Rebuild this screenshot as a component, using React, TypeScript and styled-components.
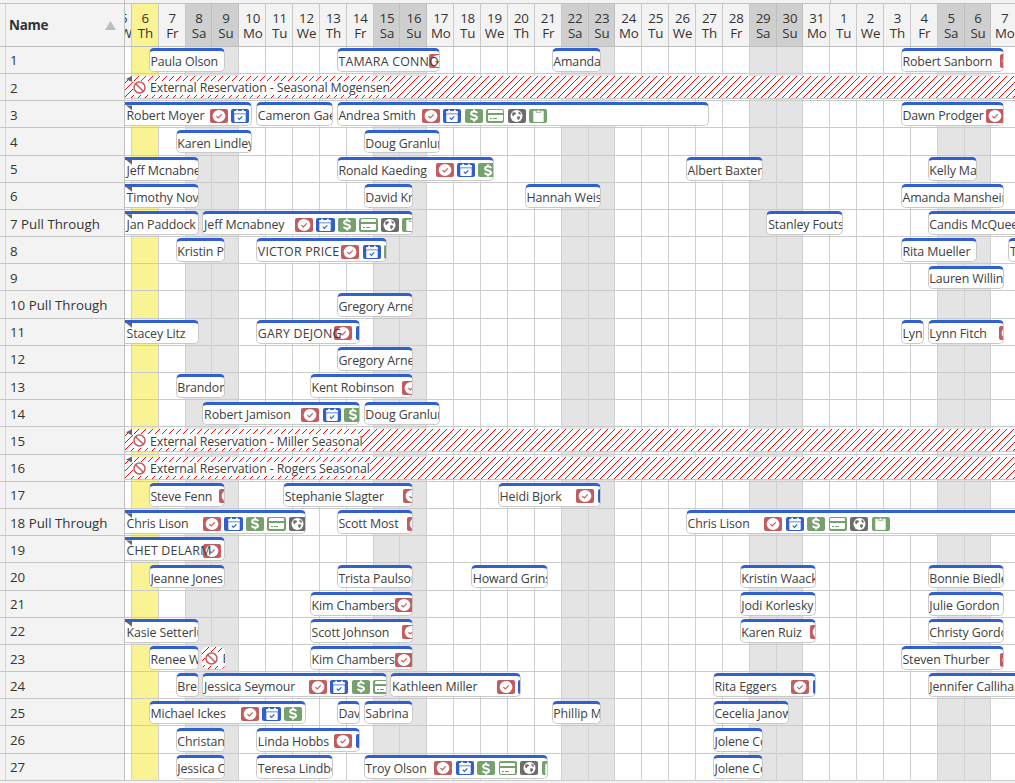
import React from 'react';
import styled, { createGlobalStyle, css } from 'styled-components';

const DAY = 26.87;
const LEAD = 6.9;
const ROW = 27.19;

const Global = createGlobalStyle`
  *, *::before, *::after { box-sizing: border-box; }
  body { margin: 0; background: #f3f3f3; overflow: hidden; }
`;

const Page = styled.div`
  width: 1015px;
  height: 783px;
  overflow: hidden;
  display: flex;
  flex-direction: column;
  background: #f3f3f3;
  color: #333;
  font-family: 'Open Sans', 'Noto Sans', sans-serif;
`;

const MonthStrip = styled.div`
  height: 4px;
  flex: none;
  display: grid;
  grid-template-columns: 125px 706px 1fr;
  background: #f3f3f3;
  border-bottom: 1px solid #c0c0c0;
`;
const MonthCell = styled.div`
  border-right: 1px solid #c0c0c0;
  &:last-child { border-right: 0; }
`;

const columns = css`
  grid-template-columns: 125px 890px;
`;

const Header = styled.div`
  display: grid;
  ${columns}
  height: 42.8px;
  flex: none;
  border-bottom: 1px solid #bdbdbd;
`;
const Gutter = styled.div`
  width: 6px;
  flex: none;
  border-right: 1px solid #d4d4d4;
`;
const NameHead = styled.div`
  display: flex;
  align-items: stretch;
  border-right: 1px solid #c0c0c0;
  font-size: 13.5px;
  font-weight: 700;
`;
const NameTitle = styled.div`
  flex: 1;
  display: flex;
  align-items: center;
  justify-content: space-between;
  padding: 1px 8px 0 3px;
  letter-spacing: -0.3px;
`;
const Days = styled.div`
  display: grid;
  grid-template-columns: ${LEAD}px repeat(35, ${DAY}px);
  overflow: hidden;
`;
const Day = styled.div<{ $tone: string }>`
  display: flex;
  flex-direction: column;
  align-items: ${p => (p.$tone === 'cut' ? 'flex-start' : 'center')};
  overflow: hidden;
  padding-top: 7px;
  padding-left: ${p => (p.$tone === 'cut' ? 0 : 1)}px;
  border-right: 1px solid ${p => (p.$tone === 'weekend' ? '#bfbfbf' : '#cacaca')};
  background: ${p => (p.$tone === 'today' ? '#faf393' : p.$tone === 'weekend' ? '#cfcfcf' : '#f3f3f3')};
  font-size: 13.3px;
  line-height: 15px;
  letter-spacing: -0.15px;
  span {
    flex: none;
    margin-left: ${p => (p.$tone === 'cut' ? -5 : 0)}px;
  }
`;

const Body = styled.div`
  display: grid;
  grid-template-rows: repeat(27, ${ROW}px);
  flex: none;
`;
const Row = styled.div`
  display: grid;
  ${columns}
  min-height: 0;
`;
const NameCell = styled.div`
  display: flex;
  min-height: 0;
  border-right: 1px solid #c0c0c0;
  border-bottom: 1px solid #c6c6c6;
  font-size: 13.3px;
`;
const NameText = styled.div`
  padding: 1px 0 0 4px;
  display: flex;
  align-items: center;
  white-space: nowrap;
`;
const Track = styled.div`
  display: grid;
  grid-template-columns: ${LEAD}px repeat(35, ${DAY}px);
  grid-template-rows: 100%;
  overflow: hidden;
  background: #fff;
  min-height: 0;
`;
const Cell = styled.div<{ $col: number; $tone: string }>`
  grid-row: 1;
  grid-column: ${p => p.$col};
  border-right: 1px solid #d0d0d0;
  border-bottom: 1px solid #cacaca;
  background: ${p => (p.$tone === 'today' ? '#faf393' : p.$tone === 'weekend' ? '#e4e4e4' : '#fff')};
`;
const Bar = styled.div<{ $s: number; $e: number; $blocked?: boolean }>`
  grid-row: 1;
  grid-column: ${p => (p.$s === 0 ? 1 : p.$s - 4)} / ${p => p.$e - 4};
  position: relative;
  z-index: 1;
  min-width: 0;
  height: 23.8px;
  margin: 1.3px -12.9px 0 ${p => (p.$s === 0 ? 0 : 16.8)}px;
  padding-top: 1px;
  padding-left: ${p => (p.$s === 0 ? 1.5 : 0.7)}px;
  display: flex;
  align-items: center;
  overflow: hidden;
  white-space: nowrap;
  background: #fff;
  border: 1px solid #c9c9c9;
  border-left-width: ${p => (p.$s === 0 ? 0 : 1)}px;
  border-top: 3px solid #2f5fd0;
  border-radius: ${p => (p.$s === 0 ? '0 5px 5px 0' : '5px')};
  ${p => p.$blocked && css`
    height: 23px;
    margin-top: 1.9px;
    border-width: 0 0 1px;
    border-color: #ccc;
    padding-left: ${p.$s === 0 ? 8 : 3}px;
    background: linear-gradient(135deg, #f00 0 5%, #fff 5% 45%, #f00 45% 55%, #fff 55% 95%, #f00 95%) 0 0 / 7px 7px;
  `}
`;
const Label = styled.span<{ $w?: number; $caps?: boolean }>`
  flex: none;
  position: relative;
  z-index: 1;
  width: ${p => (p.$w ? `${p.$w}px` : 'auto')};
  padding-top: 1px;
  font-size: 12.4px;
  line-height: 16px;
  letter-spacing: ${p => (p.$caps ? 0.2 : -0.11)}px;
  color: #404040;
`;
const Blocked = styled.span`
  flex: none;
  display: flex;
  align-items: center;
  gap: 4px;
  height: 14px;
  margin-top: 1px;
  background: #fff;
  svg { margin-top: -1px; }
`;
const Notch = styled.i<{ $blocked?: boolean }>`
  position: absolute;
  top: 0;
  left: 1px;
  width: 6px;
  height: 6px;
  background: #666;
  clip-path: ${p => (p.$blocked ? 'polygon(100% 0, 100% 100%, 0 50%)' : 'polygon(0 0, 100% 0, 100% 80%)')};
`;
const Badges = styled.span`
  display: flex;
  flex: none;
  gap: 3.4px;
`;
const Badge = styled.span<{ $c: string }>`
  width: 18.1px;
  height: 14px;
  flex: none;
  display: flex;
  align-items: center;
  justify-content: center;
  border-radius: 2px;
  background: ${p => p.$c};
`;

const red = '#c45c5f';
const blue = '#2f5fd0';
const green = '#76a06c';
const gray = '#6c6c6c';

const BadgeSet = () => (
  <Badges>
    <Badge $c={red}>
      <svg width="14" height="12" viewBox="0 0 14 12">
        <ellipse cx="7" cy="6" rx="6.4" ry="6" fill="#fff" />
        <path d="M4.4 6.1l1.9 1.9 3.5-3.6" fill="none" stroke={red} strokeWidth="1.2" />
      </svg>
    </Badge>
    <Badge $c={blue}>
      <svg width="14" height="14" viewBox="0 0 14 14">
        <path d="M2 2h1.200V.8h1.900V2h3.800V.8h1.900V2H12q1 0 1 1v1.500H1V3q0-1 1-1zM1.300 5.200h11.400V12q0 1-1 1H2.300q-1 0-1-1z" fill="#fff" />
        <path d="M4.800 8.700l1.600 1.600 2.900-3" fill="none" stroke={blue} strokeWidth="1.200" />
      </svg>
    </Badge>
    <Badge $c={green}>
      <svg width="10" height="13" viewBox="0 0 10 13">
        <path d="M8.100 4.100C7.600 2.900 6.400 2.500 5 2.500c-1.700 0-2.900.7-2.900 1.900 0 1.400 1.400 1.700 2.900 2.100 1.600.4 3 .8 3 2.200C8 9.900 6.700 10.500 5 10.500c-1.600 0-2.800-.5-3.200-1.700M5 .6v2M5 10.400v2" fill="none" stroke="#fff" strokeWidth="2" />
      </svg>
    </Badge>
    <Badge $c={green}>
      <svg width="15" height="11" viewBox="0 0 15 11">
        <path d="M1.200 0h12.600Q15 0 15 1.200V3H0V1.200Q0 0 1.200 0zM0 5h15v4.800Q15 11 13.800 11H1.200Q0 11 0 9.800z" fill="#fff" />
        <path d="M2 8.500h2M5 8.500h4" stroke={green} strokeWidth="1.100" />
      </svg>
    </Badge>
    <Badge $c={gray}>
      <svg width="13" height="12" viewBox="0 0 13 12">
        <circle cx="6.500" cy="6" r="6" fill="#fff" />
        <path d="M2.400 2.600l2.800-.4 1 1.600-2 1.200-.4 1.200-1.700-.9zM8.200 1.500l2.300 1.300.5 1.900-2.200-.4zM7.200 6.200l2.600.3.4 1.600-2 2.100-1-1.600z" fill={gray} />
      </svg>
    </Badge>
    <Badge $c={green}>
      <svg width="11" height="13" viewBox="0 0 11 13">
        <path d="M1.300 1.800h8.400q1 0 1 1V12q0 1-1 1H1.300q-1 0-1-1V2.800q0-1 1-1z" fill="#fff" />
        <path d="M3.200 3.400V1.700h1.300Q5.500 0 6.500 1.700h1.300v1.700z" fill="#fff" stroke={green} strokeWidth=".7" />
      </svg>
    </Badge>
  </Badges>
);

const NoEntry = () => (
  <svg width="13" height="13" viewBox="0 0 13 13">
    <circle cx="6.500" cy="6.500" r="5.500" fill="#fff" stroke={red} strokeWidth="1.500" />
    <path d="M2.700 2.700l7.600 7.600" stroke={red} strokeWidth="1.500" />
  </svg>
);

/* Day numbers run on past the 31st; a start of 0 means the stay began before the visible range. */
type Stay = { s: number; e: number; t: string; i?: number; blocked?: boolean };
const r = (s: number, e: number, t: string, i?: number): Stay => ({ s, e, t, i });
const x = (s: number, e: number, t: string): Stay => ({ s, e, t, blocked: true });

const rows: [string, Stay[]][] = [
  ['1', [r(6, 9, 'Paula Olson'), r(13, 17, 'TAMARA CONNO', 429), r(21, 23, 'Amanda'), r(34, 38, 'Robert Sanborn', 1000)]],
  ['2', [x(0, 40, 'External Reservation - Seasonal Mogensen')]],
  ['3', [r(0, 10, 'Robert Moyer', 209.7), r(10, 13, 'Cameron Gaetz'), r(13, 27, 'Andrea Smith', 421.7), r(34, 38, 'Dawn Prodger', 986)]],
  ['4', [r(7, 10, 'Karen Lindley'), r(14, 17, 'Doug Granlund')]],
  ['5', [r(0, 8, 'Jeff Mcnabney'), r(13, 19, 'Ronald Kaeding', 435.3), r(26, 29, 'Albert Baxter'), r(35, 37, 'Kelly Mann')]],
  ['6', [r(0, 8, 'Timothy Novak'), r(14, 16, 'David Kruse'), r(20, 23, 'Hannah Weiss'), r(34, 38, 'Amanda Mansheim')]],
  ['7 Pull Through', [r(0, 8, 'Jan Paddock'), r(8, 16, 'Jeff Mcnabney', 294.7), r(29, 32, 'Stanley Fouts'), r(35, 40, 'Candis McQueen')]],
  ['8', [r(7, 9, 'Kristin Park'), r(10, 15, 'VICTOR PRICE', 341), r(34, 37, 'Rita Mueller'), r(38, 40, 'T')]],
  ['9', [r(35, 38, 'Lauren Willing')]],
  ['10 Pull Through', [r(13, 16, 'Gregory Arnett')]],
  ['11', [r(0, 8, 'Stacey Litz'), r(10, 14, 'GARY DEJONG', 334), r(34, 35, 'Lynn'), r(35, 38, 'Lynn Fitch', 998.7)]],
  ['12', [r(13, 16, 'Gregory Arnett')]],
  ['13', [r(7, 9, 'Brandon'), r(12, 16, 'Kent Robinson', 402)]],
  ['14', [r(8, 14, 'Robert Jamison', 301), r(14, 17, 'Doug Granlund')]],
  ['15', [x(0, 40, 'External Reservation - Miller Seasonal')]],
  ['16', [x(0, 40, 'External Reservation - Rogers Seasonal')]],
  ['17', [r(6, 9, 'Steve Fenn', 219), r(11, 16, 'Stephanie Slagter', 403), r(19, 23, 'Heidi Bjork', 576)]],
  ['18 Pull Through', [r(0, 12, 'Chris Lison', 203), r(13, 16, 'Scott Most', 407), r(26, 40, 'Chris Lison', 764.3)]],
  ['19', [r(0, 9, 'CHET DELARM', 203)]],
  ['20', [r(6, 9, 'Jeanne Jones'), r(13, 16, 'Trista Paulson'), r(18, 21, 'Howard Grins'), r(28, 31, 'Kristin Waack'), r(35, 38, 'Bonnie Biedler')]],
  ['21', [r(12, 16, 'Kim Chambers', 394.5), r(28, 31, 'Jodi Korlesky'), r(35, 38, 'Julie Gordon')]],
  ['22', [r(0, 8, 'Kasie Setterlund'), r(12, 16, 'Scott Johnson', 402), r(28, 31, 'Karen Ruiz', 810), r(35, 38, 'Christy Gordon')]],
  ['23', [r(6, 8, 'Renee West'), x(8, 9, 'External'), r(12, 16, 'Kim Chambers', 394.5), r(34, 38, 'Steven Thurber', 1000)]],
  ['24', [r(7, 8, 'Brent'), r(8, 15, 'Jessica Seymour', 308.3), r(15, 20, 'Kathleen Miller', 496.7), r(27, 31, 'Rita Eggers', 791), r(35, 40, 'Jennifer Callihan')]],
  ['25', [r(6, 12, 'Michael Ickes', 240.7), r(13, 14, 'Dave'), r(14, 16, 'Sabrina'), r(21, 23, 'Phillip Mills'), r(27, 30, 'Cecelia Janow')]],
  ['26', [r(7, 9, 'Christan'), r(10, 14, 'Linda Hobbs', 334), r(27, 29, 'Jolene Cook')]],
  ['27', [r(7, 9, 'Jessica Cole'), r(10, 13, 'Teresa Lindberg'), r(14, 21, 'Troy Olson', 434), r(27, 29, 'Jolene Cook')]],
];

const names = ['Su', 'Mo', 'Tu', 'We', 'Th', 'Fr', 'Sa'];
const days = Array.from({ length: 34 }, (_, k) => {
  const d = k + 5;
  const name = names[(d + 5) % 7];
  const weekend = name === 'Sa' || name === 'Su';
  return { d, n: d > 31 ? d - 31 : d, name, tone: d === 5 ? 'cut' : d === 6 ? 'today' : weekend ? 'weekend' : 'plain' };
});

const isCaps = (t: string) => t.length > 1 && t === t.toUpperCase();
const textStart = (s: number) => (s === 0 ? 126.5 : 131.9 + DAY * (s - 6) + 18.2);

export default function App() {
  return (
    <Page>
      <Global />
      <MonthStrip><MonthCell /><MonthCell /><MonthCell /></MonthStrip>
      <Header>
        <NameHead>
          <Gutter />
          <NameTitle>
            Name
            <svg width="11" height="9" viewBox="0 0 11 9"><path d="M5.500 0L11 9H0z" fill="#bdbdbd" /></svg>
          </NameTitle>
        </NameHead>
        <Days>
          {days.map(v => (
            <Day key={v.d} $tone={v.tone}><span>{v.n}</span><span>{v.name}</span></Day>
          ))}
        </Days>
      </Header>
      <Body>
        {rows.map(([name, stays]) => (
          <Row key={name}>
            <NameCell><Gutter /><NameText>{name}</NameText></NameCell>
            <Track>
              {days.map(v => <Cell key={v.d} $col={v.d - 4} $tone={v.tone} />)}
              {stays.map(b => (
                <Bar key={b.s} $s={b.s} $e={b.e} $blocked={b.blocked}>
                  {b.blocked
                    ? <Blocked><NoEntry /><Label>{b.t}</Label></Blocked>
                    : <Label $caps={isCaps(b.t)} $w={b.i ? b.i - textStart(b.s) : undefined}>{b.t}</Label>}
                  {b.i && <BadgeSet />}
                  {b.s === 0 && <Notch $blocked={b.blocked} />}
                </Bar>
              ))}
            </Track>
          </Row>
        ))}
      </Body>
    </Page>
  );
}
